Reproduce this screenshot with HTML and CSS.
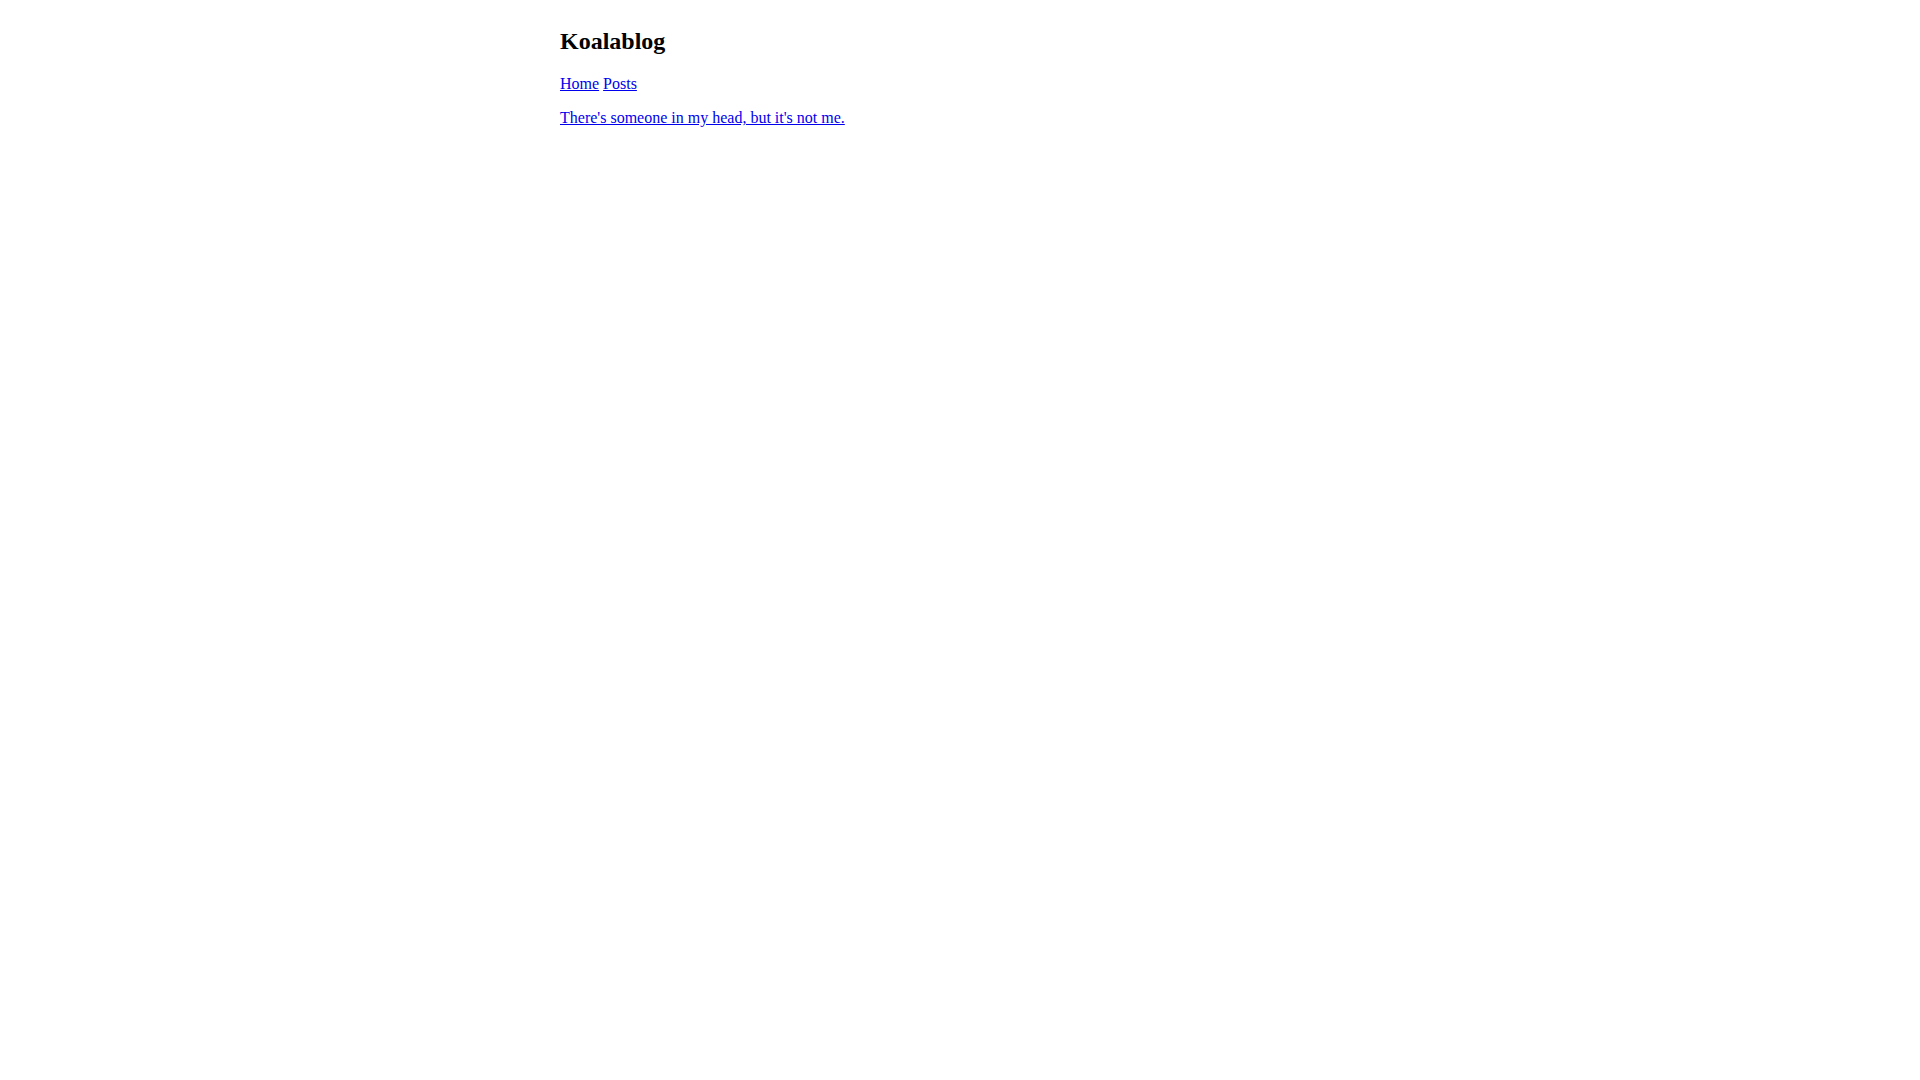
FILE: index.html
```html
<!DOCTYPE html>
<html lang="en">
<head>
  <meta charset="UTF-8" />
  <meta name="viewport" content="width=device-width, initial-scale=1.0"/>
  <title>Koalablog</title>
  <link rel="stylesheet" href="styles.css">
</head>
<body>
  <header>
    <h2 class="site-title">Koalablog</h2>
    <nav class="site-nav">
      <a href="#home">Home</a>
      <a href="#posts">Posts</a>
    </nav>
  </header>

  <main>
    <p class="post"><a href="#post">There's someone in my head, but it's not me.</a></p>
  </main>
</body>
</html>
```
FILE: styles.css
```css
body {
  max-width: 800px;
  margin: 0 auto;
  padding: 8px;
  font-family: "Times New Roman", "Liberation Serif", serif;
  font-size: 16px;
}

a {
  color: #0000ee;
}

.site-title {
  margin: 20px 0;
  font-size: 24px;
}

.post {
  margin: 16px 0;
}
```
